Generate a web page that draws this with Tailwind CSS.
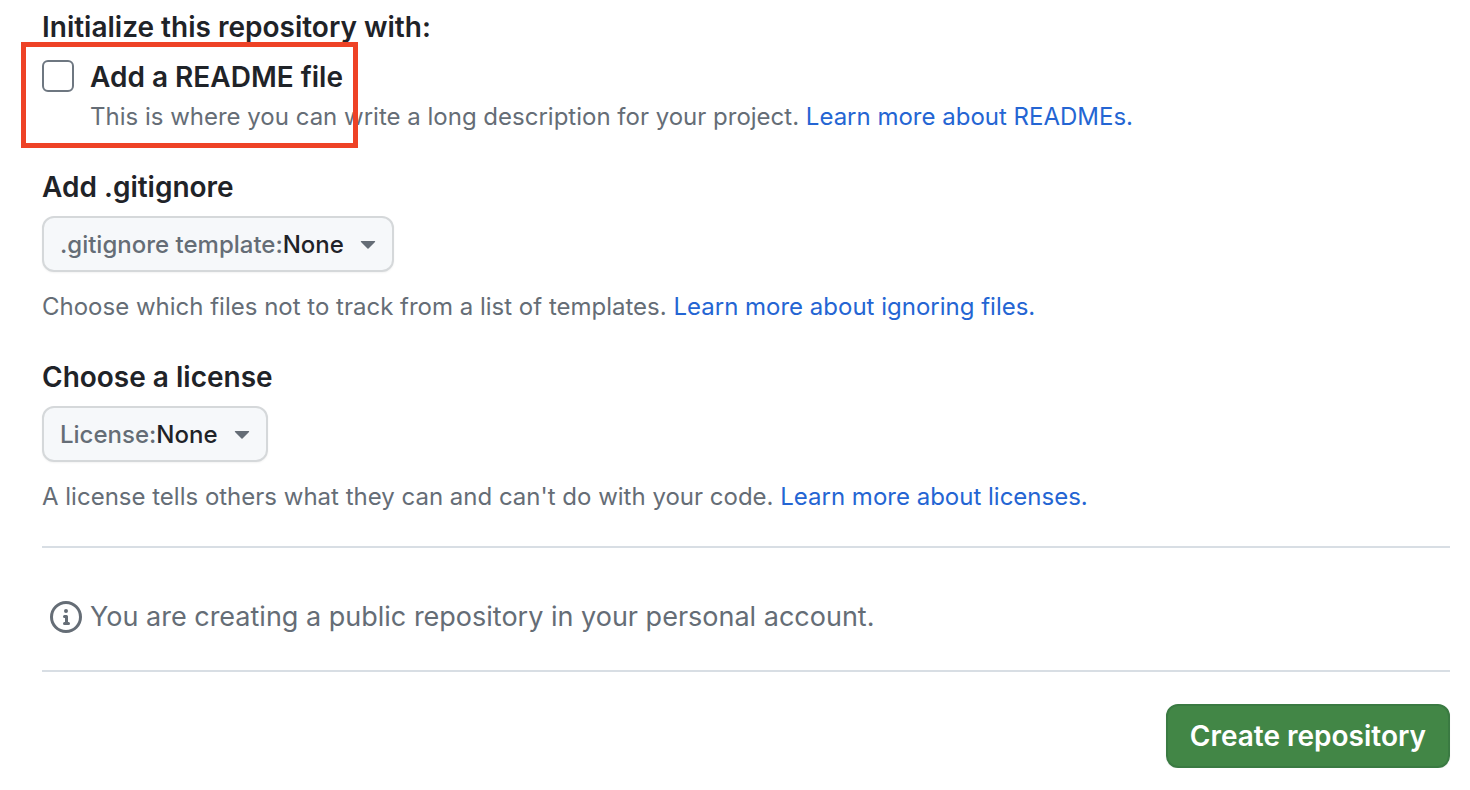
<!DOCTYPE html>
<html lang="en">
<head>
    <meta charset="UTF-8">
    <title>Create a new repository</title>
    <meta name="viewport" content="width=device-width, initial-scale=1.0">
    <!-- Tailwind CSS CDN -->
    <script src="https://cdn.jsdelivr.net/npm/@tailwindcss/browser@4"></script>
</head>
<body class="bg-white font-[Inter,sans-serif] text-[#1f2328]">
    <form class="pl-[42px] pr-5 pt-2">
        <!-- README -->
        <fieldset>
            <legend class="text-[28px] leading-[38px] font-semibold">Initialize this repository with:</legend>
            <div class="relative flex gap-4 pt-3">
                <input type="checkbox" id="readme" aria-describedby="readmeHint" class="mt-0.5 size-8 shrink-0 appearance-none rounded-md border-2 border-[#6e7781] bg-white checked:bg-[#0969da]">
                <div>
                    <label for="readme" class="block text-[28px] leading-[38px] font-semibold">Add a README file</label>
                    <p id="readmeHint" class="mt-0.5 text-2xl leading-[38px] text-[#656d76]">This is where you can write a long description for your project. <a href="#" class="text-[#2465d3] hover:underline">Learn more about READMEs.</a></p>
                </div>
                <!-- Highlight box -->
                <div class="pointer-events-none absolute -top-1 -left-[21px] h-[106px] w-[337px] border-[5px] border-[#ee4226]"></div>
            </div>
        </fieldset>

        <!-- .gitignore -->
        <section class="mt-8">
            <h2 class="text-[28px] leading-[38px] font-semibold">Add .gitignore</h2>
            <button type="button" class="mt-2.5 flex h-14 items-center rounded-xl border-2 border-[#d5d8da] bg-[#f6f8fa] px-4 pt-0.5 text-2xl font-medium shadow-xs">
                <span class="text-[#656d76]">.gitignore template:</span><span>None</span>
                <svg class="ml-4 h-2 w-4" viewBox="0 0 16 8" fill="#656d76"><path d="M1.4 0h13.2c.6 0 .8.6.4 1L8.5 7.6a.7.7 0 0 1-1 0L1 1C.6.6.8 0 1.4 0z"/></svg>
            </button>
            <p class="mt-4 text-2xl leading-[38px] text-[#656d76]">Choose which files not to track from a list of templates. <a href="#" class="text-[#2465d3] hover:underline">Learn more about ignoring files.</a></p>
        </section>

        <!-- License -->
        <section class="mt-8">
            <h2 class="text-[28px] leading-[38px] font-semibold">Choose a license</h2>
            <button type="button" class="mt-2.5 flex h-14 items-center rounded-xl border-2 border-[#d5d8da] bg-[#f6f8fa] px-4 pt-0.5 text-2xl font-medium shadow-xs">
                <span class="text-[#656d76]">License:</span><span>None</span>
                <svg class="ml-4 h-2 w-4" viewBox="0 0 16 8" fill="#656d76"><path d="M1.4 0h13.2c.6 0 .8.6.4 1L8.5 7.6a.7.7 0 0 1-1 0L1 1C.6.6.8 0 1.4 0z"/></svg>
            </button>
            <p class="mt-4 text-2xl leading-[38px] text-[#656d76]">A license tells others what they can and can't do with your code. <a href="#" class="text-[#2465d3] hover:underline">Learn more about licenses.</a></p>
        </section>

        <!-- Visibility note -->
        <div class="mt-[30px] flex items-center gap-2 border-y-2 border-[#d8dee4] px-2 pt-[50px] pb-[34px] text-[27px] leading-[38px] text-[#656d76]">
            <svg class="size-8 shrink-0" viewBox="0 0 16 16" fill="#656d76"><path d="M0 8a8 8 0 1 1 16 0A8 8 0 0 1 0 8Zm8-6.5a6.5 6.5 0 1 0 0 13 6.5 6.5 0 0 0 0-13ZM6.5 7.75A.75.75 0 0 1 7.25 7h1a.75.75 0 0 1 .75.75v2.75h.25a.75.75 0 0 1 0 1.5h-2a.75.75 0 0 1 0-1.5h.25v-2h-.25a.75.75 0 0 1-.75-.75ZM8 6a1 1 0 1 1 0-2 1 1 0 0 1 0 2Z"/></svg>
            <p>You are creating a public repository in your personal account.</p>
        </div>

        <div class="mt-8 flex justify-end">
            <button type="submit" class="h-16 rounded-xl border-2 border-[#3a7a42] bg-[#428646] px-[22px] text-[28px] font-semibold text-white shadow-xs hover:bg-[#3a7a42]">Create repository</button>
        </div>
    </form>
</body>
</html>
